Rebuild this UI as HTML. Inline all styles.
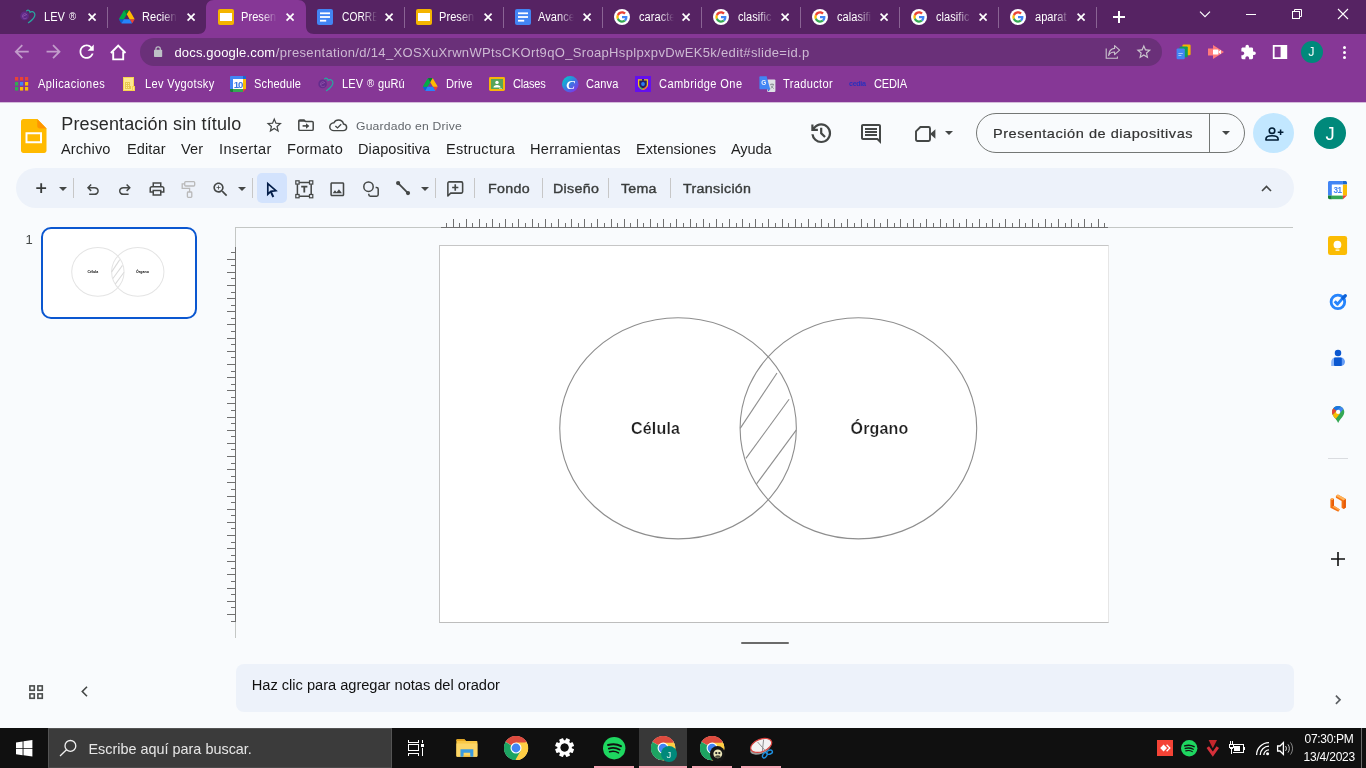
<!DOCTYPE html>
<html lang="es"><head><meta charset="utf-8"><title>Presentación sin título</title>
<style>
*{box-sizing:border-box;margin:0;padding:0}
html,body{width:1366px;height:768px;overflow:hidden;background:#f9fbfd}
body{font-family:"Liberation Sans",sans-serif;position:relative;-webkit-font-smoothing:antialiased}
#root{position:absolute;left:0;top:0;width:1366px;height:768px;overflow:hidden;will-change:transform}
svg{display:block;overflow:visible}
.tt{position:absolute;top:9px;height:16px;width:35.5px;overflow:hidden;font-size:12px;line-height:16px;color:#fff;white-space:nowrap}
.ti{display:inline-block;transform:scaleX(0.92);transform-origin:0 0;letter-spacing:0.05px}
</style></head>
<body><div id="root">
<!-- sec_chrome -->
<div style="position:absolute;left:0px;top:0px;width:1366px;height:34px;background:#562363;"></div>
<div style="position:absolute;left:0px;top:34px;width:1366px;height:68px;background:#863796;"></div>
<div style="position:absolute;left:0px;top:102px;width:1366px;height:1px;background:#d4bbdb;"></div>
<svg style="position:absolute;left:198px;top:0" width="116" height="34" viewBox="0 0 116 34"><path d="M0 34 C5 34 8 31 8 26 V8 C8 3 11 0 16 0 H100 C105 0 108 3 108 8 V26 C108 31 111 34 116 34 Z" fill="#863796"/></svg>
<svg style="position:absolute;left:20px;top:9px" width="16" height="16" viewBox="0 0 16 16" fill="none"><circle cx="4.6" cy="6.9" r="4.3" fill="#5f2a8c" opacity=".85"/><path d="M2.4 7.6L6.8 5.4" stroke="#8a4fa8" stroke-width="1"/><path d="M6.9 6.2C6.2 4.6 4.6 4.2 3.4 5.2C2 6.4 2.2 8.6 3.8 9.4C4.8 9.9 6 9.6 6.8 8.8" stroke="#8a4fa8" stroke-width="0.9"/><path d="M6.6 1.9C7.8 0.7 9.6 1 10.1 3.3C11.5 2.2 13.6 2.5 14.5 4.3C15.5 6.3 14.2 8.7 12.4 10.5C11 11.9 9.6 12.9 8.4 13.7" stroke="#2aa5a0" stroke-width="1.25" stroke-linecap="round"/></svg>
<span class="tt" style="left:43.5px;"><span class="ti">LEV <span style="font-size:10.5px;position:relative;top:-1.2px;letter-spacing:0;margin-left:1px">®</span></span></span>
<svg style="position:absolute;left:87.9px;top:13px" width="8.2" height="8.2" viewBox="0 0 8.2 8.2"><path d="M0.6 0.6L7.6 7.6M7.6 0.6L0.6 7.6" stroke="#fff" stroke-width="1.7"/></svg>
<svg style="position:absolute;left:118.5px;top:10px" width="15.5" height="13.5" viewBox="0 0 87.3 78" preserveAspectRatio="none"><path d="m6.6 66.85 3.85 6.65c.8 1.4 1.95 2.5 3.3 3.3l13.75-23.8h-27.5c0 1.55.4 3.1 1.2 4.5z" fill="#0066da"/><path d="m43.65 25-13.75-23.8c-1.35.8-2.5 1.9-3.3 3.3l-25.4 44a9.06 9.06 0 0 0 -1.2 4.5h27.5z" fill="#00ac47"/><path d="m73.55 76.8c1.35-.8 2.5-1.9 3.3-3.3l1.6-2.75 7.65-13.25c.8-1.4 1.2-2.95 1.2-4.5h-27.502l5.852 11.5z" fill="#ea4335"/><path d="m43.65 25 13.75-23.8c-1.35-.8-2.9-1.2-4.5-1.2h-18.5c-1.6 0-3.15.45-4.5 1.2z" fill="#00832d"/><path d="m59.8 53h-32.3l-13.75 23.8c1.35.8 2.9 1.2 4.5 1.2h50.8c1.6 0 3.15-.45 4.5-1.2z" fill="#2684fc"/><path d="m73.4 26.5-12.7-22c-.8-1.4-1.95-2.5-3.3-3.3l-13.75 23.8 16.15 28h27.45c0-1.55-.4-3.1-1.2-4.5z" fill="#ffba00"/></svg>
<span class="tt" style="left:141.8px;-webkit-mask-image:linear-gradient(90deg,#000 58%,transparent 100%);mask-image:linear-gradient(90deg,#000 58%,transparent 100%);"><span class="ti">Recien</span></span>
<svg style="position:absolute;left:186.9px;top:13px" width="8.2" height="8.2" viewBox="0 0 8.2 8.2"><path d="M0.6 0.6L7.6 7.6M7.6 0.6L0.6 7.6" stroke="#fff" stroke-width="1.7"/></svg>
<svg style="position:absolute;left:218px;top:9px" width="16" height="16" viewBox="0 0 16 16"><rect x="0" y="0" width="16" height="16" rx="2" fill="#F4B400"/><rect x="2" y="4" width="12" height="8" fill="#fff"/></svg>
<span class="tt" style="left:241.4px;-webkit-mask-image:linear-gradient(90deg,#000 58%,transparent 100%);mask-image:linear-gradient(90deg,#000 58%,transparent 100%);"><span class="ti">Presen</span></span>
<svg style="position:absolute;left:285.9px;top:13px" width="8.2" height="8.2" viewBox="0 0 8.2 8.2"><path d="M0.6 0.6L7.6 7.6M7.6 0.6L0.6 7.6" stroke="#fff" stroke-width="1.7"/></svg>
<svg style="position:absolute;left:317px;top:9px" width="16" height="16" viewBox="0 0 16 16"><rect x="0" y="0" width="16" height="16" rx="2" fill="#4285F4"/><rect x="3" y="3.4" width="10" height="1.8" fill="#fff"/><rect x="3" y="7.1" width="10" height="1.8" fill="#fff"/><rect x="3" y="10.8" width="6.2" height="1.8" fill="#fff"/></svg>
<span class="tt" style="left:341.6px;-webkit-mask-image:linear-gradient(90deg,#000 58%,transparent 100%);mask-image:linear-gradient(90deg,#000 58%,transparent 100%);"><span class="ti" style="transform:scaleX(0.85)">CORRE</span></span>
<svg style="position:absolute;left:384.9px;top:13px" width="8.2" height="8.2" viewBox="0 0 8.2 8.2"><path d="M0.6 0.6L7.6 7.6M7.6 0.6L0.6 7.6" stroke="#fff" stroke-width="1.7"/></svg>
<svg style="position:absolute;left:416px;top:9px" width="16" height="16" viewBox="0 0 16 16"><rect x="0" y="0" width="16" height="16" rx="2" fill="#F4B400"/><rect x="2" y="4" width="12" height="8" fill="#fff"/></svg>
<span class="tt" style="left:439.4px;-webkit-mask-image:linear-gradient(90deg,#000 58%,transparent 100%);mask-image:linear-gradient(90deg,#000 58%,transparent 100%);"><span class="ti">Presen</span></span>
<svg style="position:absolute;left:483.9px;top:13px" width="8.2" height="8.2" viewBox="0 0 8.2 8.2"><path d="M0.6 0.6L7.6 7.6M7.6 0.6L0.6 7.6" stroke="#fff" stroke-width="1.7"/></svg>
<svg style="position:absolute;left:515px;top:9px" width="16" height="16" viewBox="0 0 16 16"><rect x="0" y="0" width="16" height="16" rx="2" fill="#4285F4"/><rect x="3" y="3.4" width="10" height="1.8" fill="#fff"/><rect x="3" y="7.1" width="10" height="1.8" fill="#fff"/><rect x="3" y="10.8" width="6.2" height="1.8" fill="#fff"/></svg>
<span class="tt" style="left:538.4px;-webkit-mask-image:linear-gradient(90deg,#000 58%,transparent 100%);mask-image:linear-gradient(90deg,#000 58%,transparent 100%);"><span class="ti">Avance</span></span>
<svg style="position:absolute;left:582.9px;top:13px" width="8.2" height="8.2" viewBox="0 0 8.2 8.2"><path d="M0.6 0.6L7.6 7.6M7.6 0.6L0.6 7.6" stroke="#fff" stroke-width="1.7"/></svg>
<svg style="position:absolute;left:614px;top:9px" width="16" height="16" viewBox="0 0 64 64"><circle cx="32" cy="32" r="32" fill="#fff"/><g transform="translate(9.4,9.4) scale(0.9417)"><path fill="#EA4335" d="M24 9.5c3.54 0 6.71 1.22 9.21 3.6l6.85-6.85C35.9 2.38 30.47 0 24 0 14.62 0 6.51 5.38 2.56 13.22l7.98 6.19C12.43 13.72 17.74 9.5 24 9.5z"/><path fill="#4285F4" d="M46.98 24.55c0-1.57-.15-3.09-.38-4.55H24v9.02h12.94c-.58 2.96-2.26 5.48-4.78 7.18l7.73 6c4.51-4.18 7.09-10.36 7.09-17.65z"/><path fill="#FBBC05" d="M10.53 28.59c-.48-1.45-.76-2.99-.76-4.59s.27-3.14.76-4.59l-7.98-6.19C.92 16.46 0 20.12 0 24c0 3.88.92 7.54 2.56 10.78l7.97-6.19z"/><path fill="#34A853" d="M24 48c6.48 0 11.93-2.13 15.89-5.81l-7.73-6c-2.15 1.45-4.92 2.3-8.16 2.3-6.26 0-11.57-4.22-13.47-9.91l-7.98 6.19C6.51 42.62 14.62 48 24 48z"/></g></svg>
<span class="tt" style="left:638.5px;-webkit-mask-image:linear-gradient(90deg,#000 58%,transparent 100%);mask-image:linear-gradient(90deg,#000 58%,transparent 100%);"><span class="ti">caracte</span></span>
<svg style="position:absolute;left:681.9px;top:13px" width="8.2" height="8.2" viewBox="0 0 8.2 8.2"><path d="M0.6 0.6L7.6 7.6M7.6 0.6L0.6 7.6" stroke="#fff" stroke-width="1.7"/></svg>
<svg style="position:absolute;left:713px;top:9px" width="16" height="16" viewBox="0 0 64 64"><circle cx="32" cy="32" r="32" fill="#fff"/><g transform="translate(9.4,9.4) scale(0.9417)"><path fill="#EA4335" d="M24 9.5c3.54 0 6.71 1.22 9.21 3.6l6.85-6.85C35.9 2.38 30.47 0 24 0 14.62 0 6.51 5.38 2.56 13.22l7.98 6.19C12.43 13.72 17.74 9.5 24 9.5z"/><path fill="#4285F4" d="M46.98 24.55c0-1.57-.15-3.09-.38-4.55H24v9.02h12.94c-.58 2.96-2.26 5.48-4.78 7.18l7.73 6c4.51-4.18 7.09-10.36 7.09-17.65z"/><path fill="#FBBC05" d="M10.53 28.59c-.48-1.45-.76-2.99-.76-4.59s.27-3.14.76-4.59l-7.98-6.19C.92 16.46 0 20.12 0 24c0 3.88.92 7.54 2.56 10.78l7.97-6.19z"/><path fill="#34A853" d="M24 48c6.48 0 11.93-2.13 15.89-5.81l-7.73-6c-2.15 1.45-4.92 2.3-8.16 2.3-6.26 0-11.57-4.22-13.47-9.91l-7.98 6.19C6.51 42.62 14.62 48 24 48z"/></g></svg>
<span class="tt" style="left:737.5px;-webkit-mask-image:linear-gradient(90deg,#000 58%,transparent 100%);mask-image:linear-gradient(90deg,#000 58%,transparent 100%);"><span class="ti">clasific</span></span>
<svg style="position:absolute;left:780.9px;top:13px" width="8.2" height="8.2" viewBox="0 0 8.2 8.2"><path d="M0.6 0.6L7.6 7.6M7.6 0.6L0.6 7.6" stroke="#fff" stroke-width="1.7"/></svg>
<svg style="position:absolute;left:812px;top:9px" width="16" height="16" viewBox="0 0 64 64"><circle cx="32" cy="32" r="32" fill="#fff"/><g transform="translate(9.4,9.4) scale(0.9417)"><path fill="#EA4335" d="M24 9.5c3.54 0 6.71 1.22 9.21 3.6l6.85-6.85C35.9 2.38 30.47 0 24 0 14.62 0 6.51 5.38 2.56 13.22l7.98 6.19C12.43 13.72 17.74 9.5 24 9.5z"/><path fill="#4285F4" d="M46.98 24.55c0-1.57-.15-3.09-.38-4.55H24v9.02h12.94c-.58 2.96-2.26 5.48-4.78 7.18l7.73 6c4.51-4.18 7.09-10.36 7.09-17.65z"/><path fill="#FBBC05" d="M10.53 28.59c-.48-1.45-.76-2.99-.76-4.59s.27-3.14.76-4.59l-7.98-6.19C.92 16.46 0 20.12 0 24c0 3.88.92 7.54 2.56 10.78l7.97-6.19z"/><path fill="#34A853" d="M24 48c6.48 0 11.93-2.13 15.89-5.81l-7.73-6c-2.15 1.45-4.92 2.3-8.16 2.3-6.26 0-11.57-4.22-13.47-9.91l-7.98 6.19C6.51 42.62 14.62 48 24 48z"/></g></svg>
<span class="tt" style="left:836.5px;-webkit-mask-image:linear-gradient(90deg,#000 58%,transparent 100%);mask-image:linear-gradient(90deg,#000 58%,transparent 100%);"><span class="ti">calasifi</span></span>
<svg style="position:absolute;left:879.9px;top:13px" width="8.2" height="8.2" viewBox="0 0 8.2 8.2"><path d="M0.6 0.6L7.6 7.6M7.6 0.6L0.6 7.6" stroke="#fff" stroke-width="1.7"/></svg>
<svg style="position:absolute;left:911px;top:9px" width="16" height="16" viewBox="0 0 64 64"><circle cx="32" cy="32" r="32" fill="#fff"/><g transform="translate(9.4,9.4) scale(0.9417)"><path fill="#EA4335" d="M24 9.5c3.54 0 6.71 1.22 9.21 3.6l6.85-6.85C35.9 2.38 30.47 0 24 0 14.62 0 6.51 5.38 2.56 13.22l7.98 6.19C12.43 13.72 17.74 9.5 24 9.5z"/><path fill="#4285F4" d="M46.98 24.55c0-1.57-.15-3.09-.38-4.55H24v9.02h12.94c-.58 2.96-2.26 5.48-4.78 7.18l7.73 6c4.51-4.18 7.09-10.36 7.09-17.65z"/><path fill="#FBBC05" d="M10.53 28.59c-.48-1.45-.76-2.99-.76-4.59s.27-3.14.76-4.59l-7.98-6.19C.92 16.46 0 20.12 0 24c0 3.88.92 7.54 2.56 10.78l7.97-6.19z"/><path fill="#34A853" d="M24 48c6.48 0 11.93-2.13 15.89-5.81l-7.73-6c-2.15 1.45-4.92 2.3-8.16 2.3-6.26 0-11.57-4.22-13.47-9.91l-7.98 6.19C6.51 42.62 14.62 48 24 48z"/></g></svg>
<span class="tt" style="left:935.5px;-webkit-mask-image:linear-gradient(90deg,#000 58%,transparent 100%);mask-image:linear-gradient(90deg,#000 58%,transparent 100%);"><span class="ti">clasific</span></span>
<svg style="position:absolute;left:978.9px;top:13px" width="8.2" height="8.2" viewBox="0 0 8.2 8.2"><path d="M0.6 0.6L7.6 7.6M7.6 0.6L0.6 7.6" stroke="#fff" stroke-width="1.7"/></svg>
<svg style="position:absolute;left:1010px;top:9px" width="16" height="16" viewBox="0 0 64 64"><circle cx="32" cy="32" r="32" fill="#fff"/><g transform="translate(9.4,9.4) scale(0.9417)"><path fill="#EA4335" d="M24 9.5c3.54 0 6.71 1.22 9.21 3.6l6.85-6.85C35.9 2.38 30.47 0 24 0 14.62 0 6.51 5.38 2.56 13.22l7.98 6.19C12.43 13.72 17.74 9.5 24 9.5z"/><path fill="#4285F4" d="M46.98 24.55c0-1.57-.15-3.09-.38-4.55H24v9.02h12.94c-.58 2.96-2.26 5.48-4.78 7.18l7.73 6c4.51-4.18 7.09-10.36 7.09-17.65z"/><path fill="#FBBC05" d="M10.53 28.59c-.48-1.45-.76-2.99-.76-4.59s.27-3.14.76-4.59l-7.98-6.19C.92 16.46 0 20.12 0 24c0 3.88.92 7.54 2.56 10.78l7.97-6.19z"/><path fill="#34A853" d="M24 48c6.48 0 11.93-2.13 15.89-5.81l-7.73-6c-2.15 1.45-4.92 2.3-8.16 2.3-6.26 0-11.57-4.22-13.47-9.91l-7.98 6.19C6.51 42.62 14.62 48 24 48z"/></g></svg>
<span class="tt" style="left:1034.5px;-webkit-mask-image:linear-gradient(90deg,#000 58%,transparent 100%);mask-image:linear-gradient(90deg,#000 58%,transparent 100%);"><span class="ti">aparat</span></span>
<svg style="position:absolute;left:1077.1000000000001px;top:13px" width="8.2" height="8.2" viewBox="0 0 8.2 8.2"><path d="M0.6 0.6L7.6 7.6M7.6 0.6L0.6 7.6" stroke="#fff" stroke-width="1.7"/></svg>
<div style="position:absolute;left:107px;top:7px;width:1px;height:20.5px;background:#8a6494;"></div>
<div style="position:absolute;left:404px;top:7px;width:1px;height:20.5px;background:#8a6494;"></div>
<div style="position:absolute;left:503px;top:7px;width:1px;height:20.5px;background:#8a6494;"></div>
<div style="position:absolute;left:602px;top:7px;width:1px;height:20.5px;background:#8a6494;"></div>
<div style="position:absolute;left:701px;top:7px;width:1px;height:20.5px;background:#8a6494;"></div>
<div style="position:absolute;left:800px;top:7px;width:1px;height:20.5px;background:#8a6494;"></div>
<div style="position:absolute;left:899px;top:7px;width:1px;height:20.5px;background:#8a6494;"></div>
<div style="position:absolute;left:998px;top:7px;width:1px;height:20.5px;background:#8a6494;"></div>
<div style="position:absolute;left:1096px;top:7px;width:1px;height:20.5px;background:#8a6494;"></div>
<svg style="position:absolute;left:1113px;top:11px" width="12" height="12" viewBox="0 0 12 12"><path d="M6 0V12M0 6H12" stroke="#fff" stroke-width="2"/></svg>
<svg style="position:absolute;left:1199px;top:8px" width="12" height="12" viewBox="0 0 12 12" fill="none"><path d="M1 3.6L6 8.6L11 3.6" stroke="#fff" stroke-width="1.15"/></svg>
<div style="position:absolute;left:1246px;top:14px;width:10px;height:1px;background:#fff;"></div>
<svg style="position:absolute;left:1291px;top:8px" width="12" height="12" viewBox="0 0 12 12" fill="none" stroke="#fff" stroke-width="1"><rect x="1.5" y="3.5" width="7" height="7"/><path d="M3.5 3.5V1.5H10.5V8.5H8.5"/></svg>
<svg style="position:absolute;left:1337px;top:8px" width="12" height="12" viewBox="0 0 12 12" fill="none" stroke="#fff" stroke-width="1.1"><path d="M1 1L11 11M11 1L1 11"/></svg>
<svg style="position:absolute;left:11.35px;top:41.35px;" width="21.3" height="21.3" viewBox="0 0 24 24"><path d="M20 11H7.83l5.59-5.59L12 4l-8 8 8 8 1.41-1.41L7.83 13H20v-2z" fill="#c29ccb"/></svg>
<svg style="position:absolute;left:43.35px;top:41.35px;" width="21.3" height="21.3" viewBox="0 0 24 24"><path d="M12 4l-1.41 1.41L16.17 11H4v2h12.17l-5.58 5.59L12 20l8-8z" fill="#c29ccb"/></svg>
<svg style="position:absolute;left:75.55px;top:41.35px;" width="21.3" height="21.3" viewBox="0 0 24 24"><path d="M17.65 6.35C16.2 4.9 14.21 4 12 4c-4.42 0-7.99 3.58-7.99 8s3.57 8 7.99 8c3.73 0 6.84-2.55 7.73-6h-2.08c-.82 2.33-3.04 4-5.65 4-3.31 0-6-2.69-6-6s2.69-6 6-6c1.66 0 3.14.69 4.22 1.78L13 11h7V4l-2.35 2.35z" fill="#fff"/></svg>
<svg style="position:absolute;left:109.8px;top:43.6px" width="16.4" height="16.6" viewBox="0 0 16.4 16.6" fill="none" stroke="#fff" stroke-width="1.9"><path d="M0.9 9L8.2 1.6L15.5 9" stroke-linejoin="miter"/><path d="M3.2 7.4V15.4H13.2V7.4"/></svg>
<div style="position:absolute;left:140px;top:38px;width:1022px;height:28px;background:#6a3079;border-radius:14px;"></div>
<svg style="position:absolute;left:154px;top:46px" width="8.2" height="11" viewBox="0 0 8.2 11"><rect x="0" y="3.8" width="8.2" height="7.1" rx="0.7" fill="#bdc1c6"/><path d="M1.9 4V2.9C1.9 1.7 2.9 0.8 4.1 0.8C5.3 0.8 6.3 1.7 6.3 2.9V4" stroke="#bdc1c6" stroke-width="1.2" fill="none"/></svg>
<span style="position:absolute;left:174.40px;top:46.00px;font-size:13px;line-height:13px;color:#fff;letter-spacing:0.175px;white-space:nowrap;">docs.google.com</span>
<span style="position:absolute;left:275.80px;top:46.00px;font-size:13px;line-height:13px;color:#cdb9d3;letter-spacing:0.334px;white-space:nowrap;">/presentation/d/14_XOSXuXrwnWPtsCKOrt9qO_SroapHsplpxpvDwEK5k/edit#slide=id.p</span>
<svg style="position:absolute;left:1104.7px;top:44px" width="16" height="16" viewBox="0 0 16 16" fill="none" stroke="#cac4cd" stroke-width="1.1"><path d="M1.2 4.6V14.2H12.4V12.6"/><path d="M9.6 1.6L14.6 6.2L9.6 10.6V8C6.4 8 4.6 9.2 3.6 11.6C3.8 7.6 5.8 4.8 9.6 4.4Z" stroke-linejoin="round"/></svg>
<svg style="position:absolute;left:1135.2px;top:43.400000000000006px;" width="17.6" height="17.6" viewBox="0 0 24 24"><path d="M22 9.24l-7.19-.62L12 2 9.19 8.63 2 9.24l5.46 4.73L5.82 21 12 17.27 18.18 21l-1.63-7.03L22 9.24zM12 15.4l-3.76 2.27 1-4.28-3.32-2.88 4.38-.38L12 6.1l1.71 4.04 4.38.38-3.32 2.88 1 4.28L12 15.4z" fill="#cac4cd"/></svg>
<svg style="position:absolute;left:1176px;top:44px" width="16" height="16" viewBox="0 0 16 16"><rect x="6.4" y="0.6" width="8.2" height="10.6" rx="1.2" fill="#F4B400"/><rect x="3.6" y="2.4" width="8.2" height="10.8" rx="1.2" fill="#0F9D58"/><rect x="0.6" y="4.4" width="8.2" height="10.8" rx="1.2" fill="#4285F4"/><rect x="2.4" y="9" width="4.4" height="1" fill="#a8c7fa"/><rect x="2.4" y="11" width="3" height="1" fill="#a8c7fa"/></svg>
<svg style="position:absolute;left:1207px;top:44px" width="18" height="16" viewBox="0 0 18 16"><path d="M1 4.6H6V1L17 8L6 15V11.4H1Z" fill="#ff7b7b"/><rect x="6" y="5.4" width="5.4" height="5.2" rx="0.6" fill="#fff"/><path d="M11.4 8L13.8 5.8V10.2Z" fill="#fff"/></svg>
<svg style="position:absolute;left:1239.75px;top:43.75px;" width="16.5" height="16.5" viewBox="0 0 24 24"><path d="M20.5 11H19V7c0-1.1-.9-2-2-2h-4V3.5C13 2.12 11.88 1 10.5 1S8 2.12 8 3.5V5H4c-1.1 0-1.99.9-1.99 2v3.8H3.5c1.49 0 2.7 1.21 2.7 2.7s-1.21 2.7-2.7 2.7H2V20c0 1.1.9 2 2 2h3.8v-1.5c0-1.49 1.21-2.7 2.7-2.7 1.49 0 2.7 1.21 2.7 2.7V22H17c1.1 0 2-.9 2-2v-4h1.5c1.38 0 2.5-1.12 2.5-2.5S21.88 11 20.5 11z" fill="#fff"/></svg>
<svg style="position:absolute;left:1272px;top:44px" width="16" height="16" viewBox="0 0 16 16"><path d="M0.8 1H15.2V15H0.8Z M2.6 2.8V13.2H8.6V2.8Z" fill="#fff" fill-rule="evenodd"/></svg>
<div style="position:absolute;left:1301px;top:41px;width:22px;height:22px;background:#00897b;border-radius:50%;"></div>
<span style="position:absolute;left:1308.20px;top:46.00px;font-size:12.5px;line-height:12.5px;color:#fff;white-space:nowrap;opacity:.95">J</span>
<div style="position:absolute;left:1342.5px;top:46.0px;width:3px;height:3px;background:#fff;border-radius:50%;"></div>
<div style="position:absolute;left:1342.5px;top:51.0px;width:3px;height:3px;background:#fff;border-radius:50%;"></div>
<div style="position:absolute;left:1342.5px;top:56.0px;width:3px;height:3px;background:#fff;border-radius:50%;"></div>
<svg style="position:absolute;left:15px;top:77px;" width="13.2" height="13.6" viewBox="0 0 13.2 13.6"><rect x="0" y="0" width="3.2" height="3.6" fill="#ea4335"/><rect x="5" y="0" width="3.2" height="3.6" fill="#ea4335"/><rect x="10" y="0" width="3.2" height="3.6" fill="#ea4335"/><rect x="0" y="5" width="3.2" height="3.6" fill="#34a853"/><rect x="5" y="5" width="3.2" height="3.6" fill="#4285f4"/><rect x="10" y="5" width="3.2" height="3.6" fill="#fbbc04"/><rect x="0" y="10" width="3.2" height="3.6" fill="#34a853"/><rect x="5" y="10" width="3.2" height="3.6" fill="#fbbc04"/><rect x="10" y="10" width="3.2" height="3.6" fill="#fbbc04"/></svg>
<span style="position:absolute;left:37.70px;top:78.00px;font-size:12px;line-height:12px;color:#fff;letter-spacing:0.473px;white-space:nowrap;transform:scaleX(0.92);transform-origin:0 0;">Aplicaciones</span>
<span style="position:absolute;left:144.70px;top:78.00px;font-size:12px;line-height:12px;color:#fff;letter-spacing:0.394px;white-space:nowrap;transform:scaleX(0.92);transform-origin:0 0;">Lev Vygotsky</span>
<span style="position:absolute;left:254.20px;top:78.00px;font-size:12px;line-height:12px;color:#fff;letter-spacing:0.145px;white-space:nowrap;transform:scaleX(0.92);transform-origin:0 0;">Schedule</span>
<span style="position:absolute;left:342.30px;top:78.00px;font-size:12px;line-height:12px;color:#fff;white-space:nowrap;letter-spacing:0.12px;transform:scaleX(0.92);transform-origin:0 0">LEV <span style="font-size:10.5px;position:relative;top:-1.2px;letter-spacing:0;margin:0 0.6px 0 0.8px">®</span> guRú</span>
<span style="position:absolute;left:446.10px;top:78.00px;font-size:12px;line-height:12px;color:#fff;letter-spacing:0.160px;white-space:nowrap;transform:scaleX(0.92);transform-origin:0 0;">Drive</span>
<span style="position:absolute;left:513.30px;top:78.00px;font-size:12px;line-height:12px;color:#fff;letter-spacing:-0.208px;white-space:nowrap;transform:scaleX(0.92);transform-origin:0 0;">Clases</span>
<span style="position:absolute;left:586.20px;top:78.00px;font-size:12px;line-height:12px;color:#fff;letter-spacing:0.106px;white-space:nowrap;transform:scaleX(0.92);transform-origin:0 0;">Canva</span>
<span style="position:absolute;left:659.00px;top:78.00px;font-size:12px;line-height:12px;color:#fff;letter-spacing:0.465px;white-space:nowrap;transform:scaleX(0.92);transform-origin:0 0;">Cambridge One</span>
<span style="position:absolute;left:783.10px;top:78.00px;font-size:12px;line-height:12px;color:#fff;letter-spacing:0.382px;white-space:nowrap;transform:scaleX(0.92);transform-origin:0 0;">Traductor</span>
<span style="position:absolute;left:873.50px;top:78.00px;font-size:12px;line-height:12px;color:#fff;letter-spacing:-0.204px;white-space:nowrap;transform:scaleX(0.92);transform-origin:0 0;">CEDIA</span>
<svg style="position:absolute;left:120px;top:74px" width="18" height="20" viewBox="120 74 18 20" shape-rendering="crispEdges"><rect x="123" y="77" width="11" height="14" fill="#f8d54e"/><rect x="124" y="78" width="9" height="12" fill="#fde792"/><rect x="125" y="82" width="5" height="7" fill="#e8c74e"/><rect x="130" y="86" width="1" height="3" fill="#e8c74e"/><rect x="126" y="83" width="1" height="1" fill="#fdeaa0"/><rect x="128" y="83" width="1" height="1" fill="#fdeaa0"/><rect x="126" y="85" width="1" height="1" fill="#fdeaa0"/><rect x="128" y="85" width="1" height="1" fill="#fdeaa0"/><rect x="126" y="87" width="1" height="1" fill="#fdeaa0"/><rect x="128" y="87" width="1" height="1" fill="#fdeaa0"/><rect x="132" y="86" width="3" height="5" fill="#f8d54e"/><rect x="133" y="87" width="1" height="3" fill="#fde792"/></svg>
<svg style="position:absolute;left:230px;top:76px" width="16" height="16" viewBox="0 0 16 16"><rect x="3" y="3" width="10" height="10" fill="#fff"/><path d="M0 1.2C0 0.5 0.5 0 1.2 0H13V3H3V13H0Z" fill="#4285F4"/><path d="M13 0H14.8C15.5 0 16 0.5 16 1.2V3H13Z" fill="#1967D2"/><rect x="13" y="3" width="3" height="10" fill="#FBBC04"/><rect x="3" y="13" width="10" height="3" fill="#34A853"/><path d="M0 13H3V16H1.2C0.5 16 0 15.5 0 14.8Z" fill="#188038"/><path d="M13 13H16L13 16Z" fill="#EA4335"/><text x="8.1" y="11.5" font-family="Liberation Sans, sans-serif" font-size="9.6" font-weight="700" fill="#3b78e7" text-anchor="middle" letter-spacing="-1.1">10</text></svg>
<svg style="position:absolute;left:318px;top:77px" width="16" height="16" viewBox="0 0 16 16" fill="none"><circle cx="4.6" cy="6.9" r="4.3" fill="#5f2a8c" opacity=".85"/><path d="M2.4 7.6L6.8 5.4" stroke="#8a4fa8" stroke-width="1"/><path d="M6.9 6.2C6.2 4.6 4.6 4.2 3.4 5.2C2 6.4 2.2 8.6 3.8 9.4C4.8 9.9 6 9.6 6.8 8.8" stroke="#8a4fa8" stroke-width="0.9"/><path d="M6.6 1.9C7.8 0.7 9.6 1 10.1 3.3C11.5 2.2 13.6 2.5 14.5 4.3C15.5 6.3 14.2 8.7 12.4 10.5C11 11.9 9.6 12.9 8.4 13.7" stroke="#2aa5a0" stroke-width="1.25" stroke-linecap="round"/></svg>
<svg style="position:absolute;left:422.8px;top:77.6px" width="14.6" height="12.9" viewBox="0 0 87.3 78" preserveAspectRatio="none"><path d="m6.6 66.85 3.85 6.65c.8 1.4 1.95 2.5 3.3 3.3l13.75-23.8h-27.5c0 1.55.4 3.1 1.2 4.5z" fill="#0066da"/><path d="m43.65 25-13.75-23.8c-1.35.8-2.5 1.9-3.3 3.3l-25.4 44a9.06 9.06 0 0 0 -1.2 4.5h27.5z" fill="#00ac47"/><path d="m73.55 76.8c1.35-.8 2.5-1.9 3.3-3.3l1.6-2.75 7.65-13.25c.8-1.4 1.2-2.95 1.2-4.5h-27.502l5.852 11.5z" fill="#ea4335"/><path d="m43.65 25 13.75-23.8c-1.35-.8-2.9-1.2-4.5-1.2h-18.5c-1.6 0-3.15.45-4.5 1.2z" fill="#00832d"/><path d="m59.8 53h-32.3l-13.75 23.8c1.35.8 2.9 1.2 4.5 1.2h50.8c1.6 0 3.15-.45 4.5-1.2z" fill="#2684fc"/><path d="m73.4 26.5-12.7-22c-.8-1.4-1.95-2.5-3.3-3.3l-13.75 23.8 16.15 28h27.45c0-1.55-.4-3.1-1.2-4.5z" fill="#ffba00"/></svg>
<svg style="position:absolute;left:489px;top:77px" width="16" height="14" viewBox="0 0 16 14"><rect width="16" height="14" rx="1.4" fill="#f6b60b"/><rect x="2" y="2" width="12" height="10" fill="#57a55a"/><circle cx="8" cy="5.4" r="1.7" fill="#fff"/><path d="M4.4 10.6C4.4 8.8 6 7.9 8 7.9S11.6 8.8 11.6 10.6Z" fill="#fff"/><rect x="10" y="11.1" width="3" height="0.9" fill="#fff" opacity=".55"/></svg>
<svg style="position:absolute;left:561.5px;top:76px" width="16.5" height="16.5" viewBox="0 0 16 16"><defs><linearGradient id="cv" x1="0.1" y1="0.1" x2="0.9" y2="0.9"><stop offset="0" stop-color="#00c8cc"/><stop offset=".5" stop-color="#3a79e2"/><stop offset="1" stop-color="#8130e8"/></linearGradient></defs><circle cx="8" cy="8" r="8" fill="url(#cv)"/><text x="8.3" y="12.4" font-family="Liberation Serif, serif" font-style="italic" font-weight="700" font-size="12.6" fill="#fff" text-anchor="middle">C</text></svg>
<svg style="position:absolute;left:635px;top:76px" width="16" height="16" viewBox="0 0 16 16"><rect width="16" height="16" fill="#6410ee"/><path d="M3.6 3.8H12.4V8.4C12.4 10.8 10.4 12.4 8 13.4C5.6 12.4 3.6 10.8 3.6 8.4Z" fill="#231f63" stroke="#f7c21c" stroke-width="1.3"/><rect x="7" y="3" width="2" height="1.8" fill="#231f63"/><circle cx="8" cy="8" r="1.9" fill="#2d7df6"/><path d="M4.4 10.6C5.2 11.8 6.4 12.6 8 13.3" stroke="#34b36a" stroke-width="1.2" fill="none"/><path d="M8 13.3C9.6 12.6 10.8 11.8 11.6 10.6" stroke="#ef5a3c" stroke-width="1.2" fill="none"/></svg>
<svg style="position:absolute;left:758.5px;top:76px" width="17" height="16.5" viewBox="0 0 17 16.5"><rect x="8.2" y="3.6" width="8.2" height="12.4" rx="1" fill="#dfe1e5"/><path d="M11 8.4H15M13 7.4V8.4M11.6 12.6C13 11.6 14.2 10.2 14.4 8.4M12 9.6C12.6 10.8 13.6 11.8 14.8 12.6" stroke="#80868b" stroke-width="0.8" fill="none"/><path d="M0.4 1.2C0.4 0.6 0.9 0.2 1.4 0.2H7.6L11.2 13.2H1.4C0.9 13.2 0.4 12.8 0.4 12.2Z" fill="#4285F4"/><path d="M8.4 13.2H11.2L9.4 15.4Z" fill="#3367d6"/><text x="4.8" y="9" font-family="Liberation Sans, sans-serif" font-size="6.5" font-weight="700" fill="#e8f0fe" text-anchor="middle">G</text></svg>
<span style="position:absolute;left:849px;top:80.4px;font-size:7.2px;line-height:8px;font-weight:700;color:#2a30bd;letter-spacing:-0.35px">cedia</span>
<!-- sec_header -->
<svg style="position:absolute;left:21.4px;top:119px" width="25.5" height="34" viewBox="0 0 26 34" preserveAspectRatio="none"><path d="M2.4 0H16.6L26 9.4V31.6C26 32.9 24.9 34 23.6 34H2.4C1.1 34 0 32.9 0 31.6V2.4C0 1.1 1.1 0 2.4 0Z" fill="#FFBA00"/><path d="M16.6 0L26 9.4H19C17.7 9.4 16.6 8.3 16.6 7Z" fill="#FF9500"/><path d="M4.6 13.3H21.4V24.2H4.6Z M6.6 15.3V22.2H19.4V15.3Z" fill="#fff" fill-rule="evenodd"/></svg>
<span style="position:absolute;left:61.30px;top:115.00px;font-size:18px;line-height:18px;color:#2a2a2a;letter-spacing:0.126px;white-space:nowrap;">Presentación sin título</span>
<svg style="position:absolute;left:264.75px;top:115.75px;" width="18.5" height="18.5" viewBox="0 0 24 24"><path d="M22 9.24l-7.19-.62L12 2 9.19 8.63 2 9.24l5.46 4.73L5.82 21 12 17.27 18.18 21l-1.63-7.03L22 9.24zM12 15.4l-3.76 2.27 1-4.28-3.32-2.88 4.38-.38L12 6.1l1.71 4.04 4.38.38-3.32 2.88 1 4.28L12 15.4z" fill="#444746"/></svg>
<svg style="position:absolute;left:298px;top:118.8px" width="16" height="12.3" viewBox="0 0 16 13" fill="none" preserveAspectRatio="none"><path d="M0.8 2.2C0.8 1.5 1.3 1 2 1H6L7.6 2.6H14C14.7 2.6 15.2 3.1 15.2 3.8V10.8C15.2 11.5 14.7 12 14 12H2C1.3 12 0.8 11.5 0.8 10.8Z" stroke="#444746" stroke-width="1.5"/><path d="M0.8 1H6L7.6 2.8H0.8Z" fill="#444746"/><path d="M4.6 7.3H9.4" stroke="#444746" stroke-width="1.7"/><path d="M8 4.4L11.4 7.3L8 10.2Z" fill="#444746"/></svg>
<svg style="position:absolute;left:328.7px;top:118.6px" width="18.4" height="12.6" viewBox="0 0 19 13" fill="none" preserveAspectRatio="none"><path d="M5 12H14.6C16.6 12 18.2 10.5 18.2 8.6C18.2 6.8 16.8 5.4 15 5.2C14.5 2.8 12.4 1 9.8 1C7.8 1 6 2.1 5.1 3.9C2.7 4.1 0.8 6 0.8 8.2C0.8 10.3 2.7 12 5 12Z" stroke="#444746" stroke-width="1.5"/><path d="M6.6 7.2L8.8 9.2L12.6 5.4" stroke="#444746" stroke-width="1.4"/></svg>
<span style="position:absolute;left:355.60px;top:120.00px;font-size:11.6px;line-height:11.6px;color:#63676c;letter-spacing:0.167px;white-space:nowrap;transform:scaleX(1.05);transform-origin:0 0;">Guardado en Drive</span>
<span style="position:absolute;left:61.40px;top:142.00px;font-size:14px;line-height:14px;color:#1f1f1f;letter-spacing:0.144px;white-space:nowrap;transform:scaleX(1.04);transform-origin:0 0;">Archivo</span>
<span style="position:absolute;left:126.70px;top:142.00px;font-size:14px;line-height:14px;color:#1f1f1f;letter-spacing:0.106px;white-space:nowrap;transform:scaleX(1.04);transform-origin:0 0;">Editar</span>
<span style="position:absolute;left:181.40px;top:142.00px;font-size:14px;line-height:14px;color:#1f1f1f;letter-spacing:0.143px;white-space:nowrap;transform:scaleX(1.04);transform-origin:0 0;">Ver</span>
<span style="position:absolute;left:218.70px;top:142.00px;font-size:14px;line-height:14px;color:#1f1f1f;letter-spacing:0.401px;white-space:nowrap;transform:scaleX(1.04);transform-origin:0 0;">Insertar</span>
<span style="position:absolute;left:286.70px;top:142.00px;font-size:14px;line-height:14px;color:#1f1f1f;letter-spacing:0.246px;white-space:nowrap;transform:scaleX(1.04);transform-origin:0 0;">Formato</span>
<span style="position:absolute;left:357.70px;top:142.00px;font-size:14px;line-height:14px;color:#1f1f1f;letter-spacing:0.095px;white-space:nowrap;transform:scaleX(1.04);transform-origin:0 0;">Diapositiva</span>
<span style="position:absolute;left:445.80px;top:142.00px;font-size:14px;line-height:14px;color:#1f1f1f;letter-spacing:0.264px;white-space:nowrap;transform:scaleX(1.04);transform-origin:0 0;">Estructura</span>
<span style="position:absolute;left:530.40px;top:142.00px;font-size:14px;line-height:14px;color:#1f1f1f;letter-spacing:0.273px;white-space:nowrap;transform:scaleX(1.04);transform-origin:0 0;">Herramientas</span>
<span style="position:absolute;left:636.40px;top:142.00px;font-size:14px;line-height:14px;color:#1f1f1f;letter-spacing:0.059px;white-space:nowrap;transform:scaleX(1.04);transform-origin:0 0;">Extensiones</span>
<span style="position:absolute;left:731.40px;top:142.00px;font-size:14px;line-height:14px;color:#1f1f1f;letter-spacing:-0.081px;white-space:nowrap;transform:scaleX(1.04);transform-origin:0 0;">Ayuda</span>
<svg style="position:absolute;left:807.8px;top:119.7px;" width="26.4" height="26.4" viewBox="0 0 24 24"><path d="M12 21q-3.45 0-6.012-2.287Q3.425 16.425 3.05 13H5.1q.35 2.6 2.313 4.3Q9.375 19 12 19q2.925 0 4.963-2.038Q19 14.925 19 12t-2.037-4.963Q14.925 5 12 5q-1.725 0-3.225.8T6.25 8H9v2H3V4h2v2.350q1.275-1.600 3.113-2.475Q9.950 3 12 3q1.875 0 3.513.712 1.637.713 2.850 1.926 1.212 1.212 1.925 2.850Q21 10.125 21 12t-.712 3.513q-.713 1.637-1.925 2.850-1.213 1.212-2.850 1.925Q13.875 21 12 21Zm2.800-4.800L11 12.400V7h2v4.600l3.200 3.200Z" fill="#444746"/></svg>
<svg style="position:absolute;left:859.0px;top:121.9px;" width="24" height="24" viewBox="0 0 24 24"><path d="M21.99 4c0-1.1-.89-2-1.99-2H4c-1.1 0-2 .9-2 2v12c0 1.1.9 2 2 2h14l4 4-.01-18zM20 4v13.17L18.83 16H4V4h16zM6 12h12v2H6zm0-3h12v2H6zm0-3h12v2H6z" fill="#444746"/></svg>
<svg style="position:absolute;left:914.5px;top:126px" width="21" height="16" viewBox="0 0 21 16" fill="none"><path d="M5.4 1H13.6C14.4 1 15 1.6 15 2.4V13.6C15 14.4 14.4 15 13.6 15H2.4C1.6 15 1 14.4 1 13.6V5.4Z" stroke="#444746" stroke-width="1.9" stroke-linejoin="round"/><path d="M15.6 7.6L20.4 3.2V12.8L15.6 8.4Z" fill="#444746"/></svg>
<svg style="position:absolute;left:944.8px;top:130.70000000000002px" width="8" height="4.2" viewBox="0 0 10 5"><path d="M0 0H10L5 5Z" fill="#444746"/></svg>
<div style="position:absolute;left:976px;top:113px;width:269px;height:40px;border:1px solid #747775;border-radius:20px;"></div>
<div style="position:absolute;left:1209px;top:113px;width:1px;height:40px;background:#747775;"></div>
<span style="position:absolute;left:993.40px;top:127.00px;font-size:13.6px;line-height:13.6px;color:#333;letter-spacing:0.499px;white-space:nowrap;transform:scaleX(1.07);transform-origin:0 0;-webkit-text-stroke:0.2px #333;">Presentación de diapositivas</span>
<svg style="position:absolute;left:1222.0px;top:130.70000000000002px" width="8" height="4.2" viewBox="0 0 10 5"><path d="M0 0H10L5 5Z" fill="#444746"/></svg>
<div style="position:absolute;left:1253px;top:113px;width:41px;height:40px;background:#c2e7ff;border-radius:50%;"></div>
<svg style="position:absolute;left:1264.6px;top:126.9px" width="19" height="14" viewBox="0 0 20 15" preserveAspectRatio="none" fill="none" stroke="#001d35" stroke-width="1.7"><circle cx="7.4" cy="3.9" r="2.9"/><path d="M1 14V12.9C1 10.6 4 9.4 7.4 9.4S13.8 10.6 13.8 12.9V14Z" stroke-linejoin="round"/><path d="M16.4 2.6V8.6M13.4 5.6H19.4" stroke-width="1.6"/></svg>
<div style="position:absolute;left:1314px;top:117px;width:32px;height:32px;background:#00897b;border-radius:50%;"></div>
<span style="position:absolute;left:1325.60px;top:125.00px;font-size:18.4px;line-height:18.4px;color:#fff;white-space:nowrap;">J</span>
<div style="position:absolute;left:16px;top:168px;width:1278px;height:40px;background:#edf2fa;border-radius:20px;"></div>
<svg style="position:absolute;left:35.9px;top:182.9px" width="10.4" height="10.4" viewBox="0 0 11 11"><path d="M5.5 0.3V10.7M0.3 5.5H10.7" stroke="#393c3b" stroke-width="1.95"/></svg>
<svg style="position:absolute;left:59.0px;top:186.70000000000002px" width="8" height="4.2" viewBox="0 0 10 5"><path d="M0 0H10L5 5Z" fill="#444746"/></svg>
<div style="position:absolute;left:73px;top:178px;width:1px;height:20px;background:#c7c7c7;"></div>
<svg style="position:absolute;left:84.19999999999999px;top:180.6px;" width="17.8" height="17.8" viewBox="0 0 24 24"><path d="M7 19v-2h7.1q1.575 0 2.737-1Q18 15 18 13.5T16.838 11Q15.675 10 14.1 10H7.8l2.6 2.6L9 14 4 9l5-5 1.4 1.4L7.8 8h6.3q2.425 0 4.163 1.575Q20 11.15 20 13.5q0 2.35-1.737 3.925Q16.525 19 14.1 19Z" fill="#444746"/></svg>
<svg style="position:absolute;left:116.1px;top:180.6px;transform:scaleX(-1);" width="17.8" height="17.8" viewBox="0 0 24 24"><path d="M7 19v-2h7.1q1.575 0 2.737-1Q18 15 18 13.5T16.838 11Q15.675 10 14.1 10H7.8l2.6 2.6L9 14 4 9l5-5 1.4 1.4L7.8 8h6.3q2.425 0 4.163 1.575Q20 11.15 20 13.5q0 2.35-1.737 3.925Q16.525 19 14.1 19Z" fill="#444746"/></svg>
<svg style="position:absolute;left:148.0px;top:180.0px;" width="18" height="18" viewBox="0 0 24 24"><path d="M19 8h-1V3H6v5H5c-1.66 0-3 1.34-3 3v6h4v4h12v-4h4v-6c0-1.66-1.34-3-3-3zM8 5h8v3H8V5zm8 12v2H8v-4h8v2zm2-2v-2H6v2H4v-4c0-.55.45-1 1-1h14c.55 0 1 .45 1 1v4h-2z" fill="#444746"/></svg>
<svg style="position:absolute;left:181px;top:181px" width="14.6" height="17" viewBox="0 0 14.6 17" fill="none" stroke="#b9b9b9" stroke-width="1.3"><rect x="3.7" y="0.7" width="10" height="4.3" rx="1"/><path d="M3.7 2.9H1.2V7.4H8.6V11"/><rect x="6.4" y="11" width="4.4" height="5.4" rx="0.8"/></svg>
<svg style="position:absolute;left:211.4px;top:179.6px;" width="19" height="19" viewBox="0 0 24 24"><path d="M15.5 14h-.79l-.28-.27C15.41 12.59 16 11.11 16 9.5 16 5.91 13.09 3 9.5 3S3 5.91 3 9.5 5.91 16 9.5 16c1.61 0 3.09-.59 4.23-1.57l.27.28v.79l5 4.99L20.49 19l-4.99-5zm-6 0C7.01 14 5 11.99 5 9.5S7.01 5 9.5 5 14 7.01 14 9.5 11.99 14 9.5 14zm2.5-4h-2v2H9v-2H7V9h2V7h1v2h2v1z" fill="#444746"/></svg>
<svg style="position:absolute;left:238.0px;top:186.70000000000002px" width="8" height="4.2" viewBox="0 0 10 5"><path d="M0 0H10L5 5Z" fill="#444746"/></svg>
<div style="position:absolute;left:252px;top:178px;width:1px;height:20px;background:#c7c7c7;"></div>
<div style="position:absolute;left:257px;top:173px;width:30px;height:30px;background:#d3e3fd;border-radius:5px;"></div>
<svg style="position:absolute;left:266px;top:180.6px" width="13" height="18" viewBox="0 0 13 18" fill="none"><path d="M1.8 2.6V13.2L4.9 10.3L9.9 9.6Z" stroke="#041e49" stroke-width="1.7" stroke-linejoin="miter"/><path d="M4.8 10.6L7.3 16" stroke="#041e49" stroke-width="2"/></svg>
<svg style="position:absolute;left:294.5px;top:179.5px" width="18.6" height="18.6" viewBox="0 0 18.6 18.6" fill="none" stroke="#444746"><path d="M2.4 4.2V14.4M16.2 4.2V14.4M4.2 2.4H14.4M4.2 16.2H14.4" stroke-width="1.5"/><rect x="0.8" y="0.8" width="3.3" height="3.3" stroke-width="1.2"/><rect x="14.5" y="0.8" width="3.3" height="3.3" stroke-width="1.2"/><rect x="0.8" y="14.5" width="3.3" height="3.3" stroke-width="1.2"/><rect x="14.5" y="14.5" width="3.3" height="3.3" stroke-width="1.2"/><path d="M6.2 6.7H12.4M9.3 6.7V12.6" stroke-width="1.8"/></svg>
<svg style="position:absolute;left:327.7px;top:179.7px;" width="18.6" height="18.6" viewBox="0 0 24 24"><path d="M19 5v14H5V5h14m0-2H5c-1.1 0-2 .9-2 2v14c0 1.1.9 2 2 2h14c1.1 0 2-.9 2-2V5c0-1.1-.9-2-2-2zm-4.86 8.86l-3 3.87L9 13.14 6 17h12l-3.86-5.14z" fill="#444746"/></svg>
<svg style="position:absolute;left:362px;top:180px" width="18" height="18" viewBox="362 180 18 18" fill="none" stroke="#444746" stroke-width="1.5"><circle cx="368.5" cy="186.7" r="4.7"/><path d="M375.6 187.4H376.6C377.5 187.4 378.2 188.1 378.2 189V194.6C378.2 195.5 377.5 196.2 376.6 196.2H370.4C369.5 196.2 368.8 195.5 368.8 194.6V193.8"/></svg>
<svg style="position:absolute;left:395px;top:180px" width="16" height="16" viewBox="395 180 16 16"><path d="M398.1 183.1L408 193.1" stroke="#444746" stroke-width="1.8"/><circle cx="398.1" cy="183.1" r="2.1" fill="#444746"/><circle cx="408" cy="193.1" r="2.1" fill="#444746"/></svg>
<svg style="position:absolute;left:421.0px;top:186.70000000000002px" width="8" height="4.2" viewBox="0 0 10 5"><path d="M0 0H10L5 5Z" fill="#444746"/></svg>
<div style="position:absolute;left:435px;top:178px;width:1px;height:20px;background:#c7c7c7;"></div>
<svg style="position:absolute;left:446.6px;top:180.8px" width="16.5" height="16.4" viewBox="0 0 17 16.6" fill="none" stroke="#444746" preserveAspectRatio="none"><path d="M0.9 15.2V2.2C0.9 1.5 1.5 0.9 2.2 0.9H14.8C15.5 0.9 16.1 1.5 16.1 2.2V11C16.1 11.7 15.5 12.3 14.8 12.3H3.8Z" stroke-width="1.6" stroke-linejoin="round"/><path d="M8.5 3.4V9.8M5.3 6.6H11.7" stroke-width="1.7"/></svg>
<div style="position:absolute;left:474px;top:178px;width:1px;height:20px;background:#c7c7c7;"></div>
<span style="position:absolute;left:487.80px;top:182.00px;font-size:13.7px;line-height:13.7px;color:#3a3d3c;letter-spacing:0.289px;white-space:nowrap;transform:scaleX(1.04);transform-origin:0 0;-webkit-text-stroke:0.4px #3a3d3c;">Fondo</span>
<span style="position:absolute;left:552.50px;top:182.00px;font-size:13.7px;line-height:13.7px;color:#3a3d3c;letter-spacing:0.296px;white-space:nowrap;transform:scaleX(1.04);transform-origin:0 0;-webkit-text-stroke:0.4px #3a3d3c;">Diseño</span>
<div style="position:absolute;left:542px;top:178px;width:1px;height:20px;background:#c7c7c7;"></div>
<div style="position:absolute;left:608px;top:178px;width:1px;height:20px;background:#c7c7c7;"></div>
<span style="position:absolute;left:621.40px;top:182.00px;font-size:13.7px;line-height:13.7px;color:#3a3d3c;letter-spacing:0.182px;white-space:nowrap;transform:scaleX(1.04);transform-origin:0 0;-webkit-text-stroke:0.4px #3a3d3c;">Tema</span>
<div style="position:absolute;left:670px;top:178px;width:1px;height:20px;background:#c7c7c7;"></div>
<span style="position:absolute;left:683.40px;top:182.00px;font-size:13.7px;line-height:13.7px;color:#3a3d3c;letter-spacing:0.308px;white-space:nowrap;transform:scaleX(1.04);transform-origin:0 0;-webkit-text-stroke:0.4px #3a3d3c;">Transición</span>
<svg style="position:absolute;left:1260.6px;top:185.4px" width="11" height="7" viewBox="0 0 11 7" fill="none"><path d="M1 6L5.5 1.5L10 6" stroke="#444746" stroke-width="1.6"/></svg>
<!-- sec_editor -->
<span style="position:absolute;left:25.40px;top:233.00px;font-size:13px;line-height:13px;color:#444746;white-space:nowrap;">1</span>
<div style="position:absolute;left:41px;top:227px;width:156px;height:92px;background:#fff;border:2.5px solid #0b57d0;border-radius:10px;"></div>
<svg style="position:absolute;left:43px;top:229px" width="152" height="88" viewBox="43 229 152 88"><g transform="translate(119,273) scale(0.2212) translate(-773.5,-433.5)"><ellipse cx="678.05" cy="428.3" rx="118.3" ry="110.6" fill="none" stroke="#e4e4e4" stroke-width="4.6"/><ellipse cx="858.4" cy="428.3" rx="118.3" ry="110.6" fill="none" stroke="#e4e4e4" stroke-width="4.6"/><path d="M777 373L740.2 428.4" stroke="#dadada" stroke-width="4.6" fill="none"/><path d="M789.1 399.2L745.9 458.4" stroke="#dadada" stroke-width="4.6" fill="none"/><path d="M796.2 430.2L756.6 483.8" stroke="#dadada" stroke-width="4.6" fill="none"/><text x="631" y="434" font-family="Liberation Sans, sans-serif" font-weight="700" font-size="16" fill="#000"  textLength="49" lengthAdjust="spacing">Célula</text><text x="850.6" y="434" font-family="Liberation Sans, sans-serif" font-weight="700" font-size="16" fill="#000"  textLength="57.6" lengthAdjust="spacing">Órgano</text></g></svg>
<div style="position:absolute;left:235px;top:227px;width:1058px;height:1px;background:#c4c7c5;"></div>
<div style="position:absolute;left:235px;top:227px;width:1px;height:411px;background:#c4c7c5;"></div>
<svg style="position:absolute;left:0;top:0" width="1366" height="728" viewBox="0 0 1366 728" shape-rendering="crispEdges"><rect x="441" y="227" width="667" height="1" fill="#707070"/><rect x="446" y="223" width="1" height="4" fill="#707070"/><rect x="453" y="219" width="1" height="8" fill="#707070"/><rect x="459" y="223" width="1" height="4" fill="#707070"/><rect x="466" y="219" width="1" height="8" fill="#707070"/><rect x="472" y="223" width="1" height="4" fill="#707070"/><rect x="479" y="219" width="1" height="8" fill="#707070"/><rect x="486" y="223" width="1" height="4" fill="#707070"/><rect x="492" y="219" width="1" height="8" fill="#707070"/><rect x="499" y="223" width="1" height="4" fill="#707070"/><rect x="505" y="219" width="1" height="8" fill="#707070"/><rect x="512" y="223" width="1" height="4" fill="#707070"/><rect x="518" y="219" width="1" height="8" fill="#707070"/><rect x="525" y="223" width="1" height="4" fill="#707070"/><rect x="532" y="219" width="1" height="8" fill="#707070"/><rect x="538" y="223" width="1" height="4" fill="#707070"/><rect x="545" y="219" width="1" height="8" fill="#707070"/><rect x="551" y="223" width="1" height="4" fill="#707070"/><rect x="558" y="219" width="1" height="8" fill="#707070"/><rect x="565" y="223" width="1" height="4" fill="#707070"/><rect x="571" y="219" width="1" height="8" fill="#707070"/><rect x="578" y="223" width="1" height="4" fill="#707070"/><rect x="584" y="219" width="1" height="8" fill="#707070"/><rect x="591" y="223" width="1" height="4" fill="#707070"/><rect x="597" y="219" width="1" height="8" fill="#707070"/><rect x="604" y="223" width="1" height="4" fill="#707070"/><rect x="611" y="219" width="1" height="8" fill="#707070"/><rect x="617" y="223" width="1" height="4" fill="#707070"/><rect x="624" y="219" width="1" height="8" fill="#707070"/><rect x="630" y="223" width="1" height="4" fill="#707070"/><rect x="637" y="219" width="1" height="8" fill="#707070"/><rect x="643" y="223" width="1" height="4" fill="#707070"/><rect x="650" y="219" width="1" height="8" fill="#707070"/><rect x="657" y="223" width="1" height="4" fill="#707070"/><rect x="663" y="219" width="1" height="8" fill="#707070"/><rect x="670" y="223" width="1" height="4" fill="#707070"/><rect x="676" y="219" width="1" height="8" fill="#707070"/><rect x="683" y="223" width="1" height="4" fill="#707070"/><rect x="690" y="219" width="1" height="8" fill="#707070"/><rect x="696" y="223" width="1" height="4" fill="#707070"/><rect x="703" y="219" width="1" height="8" fill="#707070"/><rect x="709" y="223" width="1" height="4" fill="#707070"/><rect x="716" y="219" width="1" height="8" fill="#707070"/><rect x="722" y="223" width="1" height="4" fill="#707070"/><rect x="729" y="219" width="1" height="8" fill="#707070"/><rect x="736" y="223" width="1" height="4" fill="#707070"/><rect x="742" y="219" width="1" height="8" fill="#707070"/><rect x="749" y="223" width="1" height="4" fill="#707070"/><rect x="755" y="219" width="1" height="8" fill="#707070"/><rect x="762" y="223" width="1" height="4" fill="#707070"/><rect x="768" y="219" width="1" height="8" fill="#707070"/><rect x="775" y="223" width="1" height="4" fill="#707070"/><rect x="782" y="219" width="1" height="8" fill="#707070"/><rect x="788" y="223" width="1" height="4" fill="#707070"/><rect x="795" y="219" width="1" height="8" fill="#707070"/><rect x="801" y="223" width="1" height="4" fill="#707070"/><rect x="808" y="219" width="1" height="8" fill="#707070"/><rect x="815" y="223" width="1" height="4" fill="#707070"/><rect x="821" y="219" width="1" height="8" fill="#707070"/><rect x="828" y="223" width="1" height="4" fill="#707070"/><rect x="834" y="219" width="1" height="8" fill="#707070"/><rect x="841" y="223" width="1" height="4" fill="#707070"/><rect x="847" y="219" width="1" height="8" fill="#707070"/><rect x="854" y="223" width="1" height="4" fill="#707070"/><rect x="861" y="219" width="1" height="8" fill="#707070"/><rect x="867" y="223" width="1" height="4" fill="#707070"/><rect x="874" y="219" width="1" height="8" fill="#707070"/><rect x="880" y="223" width="1" height="4" fill="#707070"/><rect x="887" y="219" width="1" height="8" fill="#707070"/><rect x="894" y="223" width="1" height="4" fill="#707070"/><rect x="900" y="219" width="1" height="8" fill="#707070"/><rect x="907" y="223" width="1" height="4" fill="#707070"/><rect x="913" y="219" width="1" height="8" fill="#707070"/><rect x="920" y="223" width="1" height="4" fill="#707070"/><rect x="926" y="219" width="1" height="8" fill="#707070"/><rect x="933" y="223" width="1" height="4" fill="#707070"/><rect x="940" y="219" width="1" height="8" fill="#707070"/><rect x="946" y="223" width="1" height="4" fill="#707070"/><rect x="953" y="219" width="1" height="8" fill="#707070"/><rect x="959" y="223" width="1" height="4" fill="#707070"/><rect x="966" y="219" width="1" height="8" fill="#707070"/><rect x="972" y="223" width="1" height="4" fill="#707070"/><rect x="979" y="219" width="1" height="8" fill="#707070"/><rect x="986" y="223" width="1" height="4" fill="#707070"/><rect x="992" y="219" width="1" height="8" fill="#707070"/><rect x="999" y="223" width="1" height="4" fill="#707070"/><rect x="1005" y="219" width="1" height="8" fill="#707070"/><rect x="1012" y="223" width="1" height="4" fill="#707070"/><rect x="1019" y="219" width="1" height="8" fill="#707070"/><rect x="1025" y="223" width="1" height="4" fill="#707070"/><rect x="1032" y="219" width="1" height="8" fill="#707070"/><rect x="1038" y="223" width="1" height="4" fill="#707070"/><rect x="1045" y="219" width="1" height="8" fill="#707070"/><rect x="1051" y="223" width="1" height="4" fill="#707070"/><rect x="1058" y="219" width="1" height="8" fill="#707070"/><rect x="1065" y="223" width="1" height="4" fill="#707070"/><rect x="1071" y="219" width="1" height="8" fill="#707070"/><rect x="1078" y="223" width="1" height="4" fill="#707070"/><rect x="1084" y="219" width="1" height="8" fill="#707070"/><rect x="1091" y="223" width="1" height="4" fill="#707070"/><rect x="1098" y="219" width="1" height="8" fill="#707070"/><rect x="1104" y="223" width="1" height="4" fill="#707070"/><rect x="235" y="247" width="1" height="375" fill="#707070"/><rect x="231" y="252" width="4" height="1" fill="#707070"/><rect x="227" y="259" width="8" height="1" fill="#707070"/><rect x="231" y="265" width="4" height="1" fill="#707070"/><rect x="227" y="272" width="8" height="1" fill="#707070"/><rect x="231" y="278" width="4" height="1" fill="#707070"/><rect x="227" y="285" width="8" height="1" fill="#707070"/><rect x="231" y="292" width="4" height="1" fill="#707070"/><rect x="227" y="298" width="8" height="1" fill="#707070"/><rect x="231" y="305" width="4" height="1" fill="#707070"/><rect x="227" y="311" width="8" height="1" fill="#707070"/><rect x="231" y="318" width="4" height="1" fill="#707070"/><rect x="227" y="324" width="8" height="1" fill="#707070"/><rect x="231" y="331" width="4" height="1" fill="#707070"/><rect x="227" y="338" width="8" height="1" fill="#707070"/><rect x="231" y="344" width="4" height="1" fill="#707070"/><rect x="227" y="351" width="8" height="1" fill="#707070"/><rect x="231" y="357" width="4" height="1" fill="#707070"/><rect x="227" y="364" width="8" height="1" fill="#707070"/><rect x="231" y="371" width="4" height="1" fill="#707070"/><rect x="227" y="377" width="8" height="1" fill="#707070"/><rect x="231" y="384" width="4" height="1" fill="#707070"/><rect x="227" y="390" width="8" height="1" fill="#707070"/><rect x="231" y="397" width="4" height="1" fill="#707070"/><rect x="227" y="403" width="8" height="1" fill="#707070"/><rect x="231" y="410" width="4" height="1" fill="#707070"/><rect x="227" y="417" width="8" height="1" fill="#707070"/><rect x="231" y="423" width="4" height="1" fill="#707070"/><rect x="227" y="430" width="8" height="1" fill="#707070"/><rect x="231" y="436" width="4" height="1" fill="#707070"/><rect x="227" y="443" width="8" height="1" fill="#707070"/><rect x="231" y="449" width="4" height="1" fill="#707070"/><rect x="227" y="456" width="8" height="1" fill="#707070"/><rect x="231" y="463" width="4" height="1" fill="#707070"/><rect x="227" y="469" width="8" height="1" fill="#707070"/><rect x="231" y="476" width="4" height="1" fill="#707070"/><rect x="227" y="482" width="8" height="1" fill="#707070"/><rect x="231" y="489" width="4" height="1" fill="#707070"/><rect x="227" y="496" width="8" height="1" fill="#707070"/><rect x="231" y="502" width="4" height="1" fill="#707070"/><rect x="227" y="509" width="8" height="1" fill="#707070"/><rect x="231" y="515" width="4" height="1" fill="#707070"/><rect x="227" y="522" width="8" height="1" fill="#707070"/><rect x="231" y="528" width="4" height="1" fill="#707070"/><rect x="227" y="535" width="8" height="1" fill="#707070"/><rect x="231" y="542" width="4" height="1" fill="#707070"/><rect x="227" y="548" width="8" height="1" fill="#707070"/><rect x="231" y="555" width="4" height="1" fill="#707070"/><rect x="227" y="561" width="8" height="1" fill="#707070"/><rect x="231" y="568" width="4" height="1" fill="#707070"/><rect x="227" y="574" width="8" height="1" fill="#707070"/><rect x="231" y="581" width="4" height="1" fill="#707070"/><rect x="227" y="588" width="8" height="1" fill="#707070"/><rect x="231" y="594" width="4" height="1" fill="#707070"/><rect x="227" y="601" width="8" height="1" fill="#707070"/><rect x="231" y="607" width="4" height="1" fill="#707070"/><rect x="227" y="614" width="8" height="1" fill="#707070"/><rect x="231" y="621" width="4" height="1" fill="#707070"/></svg>
<div style="position:absolute;left:439px;top:245px;width:670px;height:378px;background:#fff;border:1px solid #c6c6c6;border-right-color:#e6e6e6;border-bottom-color:#bdbdbd;"></div>
<svg style="position:absolute;left:0;top:0" width="1366" height="728" viewBox="0 0 1366 728"><ellipse cx="678.05" cy="428.3" rx="118.3" ry="110.6" fill="none" stroke="#8e8e8e" stroke-width="1.1"/><ellipse cx="858.4" cy="428.3" rx="118.3" ry="110.6" fill="none" stroke="#8e8e8e" stroke-width="1.1"/><path d="M777 373L740.2 428.4" stroke="#8e8e8e" stroke-width="1.1" fill="none"/><path d="M789.1 399.2L745.9 458.4" stroke="#8e8e8e" stroke-width="1.1" fill="none"/><path d="M796.2 430.2L756.6 483.8" stroke="#8e8e8e" stroke-width="1.1" fill="none"/><text x="631" y="434" font-family="Liberation Sans, sans-serif" font-weight="700" font-size="16" fill="#1f1f1f" stroke="#fff" stroke-width="0.22" textLength="49" lengthAdjust="spacing">Célula</text><text x="850.6" y="434" font-family="Liberation Sans, sans-serif" font-weight="700" font-size="16" fill="#1f1f1f" stroke="#fff" stroke-width="0.22" textLength="57.6" lengthAdjust="spacing">Órgano</text></svg>
<div style="position:absolute;left:741px;top:642px;width:48px;height:2px;background:#6b6b6b;border-radius:1px;"></div>
<div style="position:absolute;left:236px;top:664px;width:1058px;height:48px;background:#edf2fa;border-radius:8px;"></div>
<span style="position:absolute;left:251.80px;top:678.00px;font-size:14.67px;line-height:14.67px;color:#111;letter-spacing:-0.030px;white-space:nowrap;">Haz clic para agregar notas del orador</span>
<svg style="position:absolute;left:29px;top:685px;" width="14.2" height="14.2" viewBox="0 0 14.2 14.2"><rect x="0.9" y="0.9" width="4.4" height="4.4" fill="none" stroke="#4a4d4c" stroke-width="1.6"/><rect x="8.9" y="0.9" width="4.4" height="4.4" fill="none" stroke="#4a4d4c" stroke-width="1.6"/><rect x="0.9" y="8.9" width="4.4" height="4.4" fill="none" stroke="#4a4d4c" stroke-width="1.6"/><rect x="8.9" y="8.9" width="4.4" height="4.4" fill="none" stroke="#4a4d4c" stroke-width="1.6"/></svg>
<svg style="position:absolute;left:80.6px;top:686.2px" width="7" height="11" viewBox="0 0 7 11" fill="none"><path d="M6 0.8L1.3 5.5L6 10.2" stroke="#444746" stroke-width="1.6"/></svg>
<svg style="position:absolute;left:1328.2px;top:180.8px" width="19" height="18.2" viewBox="0 0 19 18.2"><rect x="3" y="3" width="13" height="12.4" fill="#fff"/><path d="M0 1.6C0 0.7 0.7 0 1.6 0H14.9V3.6H3.8V14.6H0Z" fill="#4285F4"/><path d="M14.9 0H17.4C18.3 0 19 0.7 19 1.6V3.6H14.9Z" fill="#1967D2"/><rect x="14.9" y="3.6" width="4.1" height="11" fill="#FBBC04"/><rect x="3.8" y="14.6" width="11.1" height="3.6" fill="#34A853"/><path d="M0 14.6H3.8V18.2H1.6C0.7 18.2 0 17.5 0 16.6Z" fill="#188038"/><path d="M14.9 14.6H19L14.9 18.2Z" fill="#EA4335"/><text x="9.45" y="12.4" font-family="Liberation Sans, sans-serif" font-size="8.2" font-weight="700" fill="#4285F4" text-anchor="middle" letter-spacing="-0.7">31</text></svg>
<svg style="position:absolute;left:1328px;top:236.4px" width="19.1" height="19.1" viewBox="0 0 19.2 19.4" preserveAspectRatio="none"><rect width="19.2" height="19.4" rx="2.4" fill="#FBBC04"/><circle cx="9.5" cy="8.8" r="3.9" fill="#fff"/><rect x="7.6" y="13.7" width="3.9" height="1.3" fill="#fff"/></svg>
<svg style="position:absolute;left:1328px;top:292px" width="20" height="20" viewBox="1328 292 20 20" fill="none"><circle cx="1337.9" cy="301.9" r="6.8" stroke="#2684FC" stroke-width="2.8"/><path d="M1334.7 301.3L1337.5 304.1L1343.2 297.6" stroke="#2684FC" stroke-width="2.9" stroke-linejoin="round"/><path d="M1342.9 298L1345.3 295.7" stroke="#0b61d9" stroke-width="3.3" stroke-linecap="round"/></svg>
<svg style="position:absolute;left:1330px;top:349px" width="16" height="18" viewBox="1330 349 16 18"><circle cx="1338" cy="352.9" r="3.25" fill="#0b57d0"/><path d="M1331.2 365.9V362C1331.2 359.4 1333 357.5 1335.6 357.5H1338V365.9Z" fill="#8ab4f8"/><path d="M1338 357.5H1340.6C1343.2 357.5 1345 359.5 1345 361.8C1345 364.1 1343.4 365.9 1341 365.9H1338Z" fill="#669df6"/><rect x="1334" y="357.5" width="7.8" height="8.4" rx="1" fill="#0b57d0"/></svg>
<svg style="position:absolute;left:1332px;top:405.5px" width="12.3" height="17.1" viewBox="0 0 12.8 18" preserveAspectRatio="none"><path d="M6.4 0C2.9 0 0 2.8 0 6.3C0 9.4 2 11.4 3.8 13.6C5 15.1 5.8 16.6 6.4 18C7 16.6 7.8 15.1 9 13.6C10.8 11.4 12.8 9.4 12.8 6.3C12.8 2.8 9.9 0 6.4 0Z" fill="#34A853"/><path d="M1.5 2.3C0.6 3.4 0 4.8 0 6.3C0 7.5 0.3 8.5 0.7 9.4L4.8 5Z" fill="#EA4335"/><path d="M6.4 6.3L4.8 5L0.7 9.4C1.4 10.9 2.6 12.2 3.8 13.6L8.4 7.8Z" fill="#FBBC04"/><path d="M1.5 2.3C2.6 0.9 4.4 0 6.4 0C7.5 0 8.5 0.25 9.4 0.7L4.8 5Z" fill="#1a73e8"/><path d="M9.4 0.7C10.5 1.2 11.4 2.1 12 3.2L7.6 8.2L4.8 5Z" fill="#4285F4"/><circle cx="6.4" cy="6.3" r="2.25" fill="#fff"/></svg>
<div style="position:absolute;left:1328px;top:458px;width:20px;height:1px;background:#dadce0;"></div>
<svg style="position:absolute;left:1329px;top:493px" width="18" height="20" viewBox="1329 493 18 20"><path d="M1335.9 496L1337.9 494.6L1345.8 499.1V507.5L1343.6 508.9L1341.6 507.7V500.9L1335.9 497.8Z" fill="#F57212"/><path d="M1335.9 496L1337.9 494.6L1345.8 499.1L1343.7 500.4Z" fill="#FFB45A"/><path d="M1343.7 500.4L1345.8 499.1V507.5L1343.6 508.9Z" fill="#E65A0A"/><path d="M1330.4 499.1L1332.3 498L1334 499.1V505.8L1339.9 509.5L1338.3 511.8L1330.4 507.7Z" fill="#F57212"/><path d="M1330.4 499.1L1332.3 498L1334 499.1L1332.3 500.2Z" fill="#FFB45A"/><path d="M1332.3 500.2L1334 499.1V505.8L1332.3 506.8Z" fill="#E65A0A"/><path d="M1332.3 506.8L1334 505.8L1339.9 509.5L1338.6 510.6Z" fill="#FFA548"/></svg>
<svg style="position:absolute;left:1331px;top:552px" width="14" height="14" viewBox="0 0 14 14"><path d="M7 0V14M0 7H14" stroke="#111" stroke-width="1.6"/></svg>
<svg style="position:absolute;left:1334.8px;top:695.2px" width="6.2" height="9.6" viewBox="0 0 7 11" fill="none"><path d="M1 0.8L5.7 5.5L1 10.2" stroke="#5a5d61" stroke-width="1.9"/></svg>
<!-- sec_taskbar -->
<div style="position:absolute;left:0px;top:728px;width:1366px;height:40px;background:#101010;"></div>
<div style="position:absolute;left:48px;top:728px;width:344px;height:40px;background:#3b3b3b;border:1px solid #545454;border-bottom-color:#4a4a4a;"></div>
<svg style="position:absolute;left:16px;top:739.6px" width="16.4" height="16.6" viewBox="0 0 16.4 16.6"><path d="M0 2.4L6.6 1.5V7.9H0Z M7.5 1.35L16.4 0.1V7.9H7.5Z M0 8.8H6.6V15.2L0 14.3Z M7.5 8.8H16.4V16.6L7.5 15.35Z" fill="#fff"/></svg>
<svg style="position:absolute;left:59px;top:739px" width="18" height="18" viewBox="0 0 18 18" fill="none" stroke="#f0f0f0" stroke-width="1.3"><circle cx="11.4" cy="6.9" r="5.4"/><path d="M7.5 10.7L1 17"/></svg>
<span style="position:absolute;left:88.40px;top:742.00px;font-size:14.4px;line-height:14.4px;color:#e6e6e6;letter-spacing:0.012px;white-space:nowrap;">Escribe aquí para buscar.</span>
<svg style="position:absolute;left:400px;top:732px" width="30" height="30" viewBox="400 732 30 30" shape-rendering="crispEdges"><rect x="408" y="744" width="11" height="1" fill="#fff"/><rect x="408" y="750" width="11" height="1" fill="#fff"/><rect x="408" y="744" width="1" height="7" fill="#fff"/><rect x="418" y="744" width="1" height="7" fill="#fff"/><rect x="408" y="742" width="11" height="1" fill="#fff"/><rect x="408" y="740" width="1" height="2" fill="#fff"/><rect x="418" y="740" width="1" height="2" fill="#fff"/><rect x="408" y="753" width="11" height="1" fill="#fff"/><rect x="408" y="753" width="1" height="3" fill="#fff"/><rect x="418" y="753" width="1" height="3" fill="#fff"/><rect x="422" y="740" width="1" height="3" fill="#fff"/><rect x="421" y="744" width="3" height="3" fill="#fff"/><rect x="422" y="748" width="1" height="8" fill="#fff"/></svg>
<svg style="position:absolute;left:455.8px;top:738.8px" width="21.8" height="18.2" viewBox="0 0 22.4 18" preserveAspectRatio="none"><path d="M0.4 1.2C0.4 0.6 0.9 0.2 1.4 0.2H8.6L10.2 2H21C21.6 2 22 2.4 22 3V16.6C22 17.2 21.6 17.6 21 17.6H1.4C0.9 17.6 0.4 17.2 0.4 16.6Z" fill="#f9c846"/><path d="M0.4 1.2C0.4 0.6 0.9 0.2 1.4 0.2H8.6L10.2 2H0.4Z" fill="#e8a820"/><path d="M0.4 4.4H22V16.6C22 17.2 21.6 17.6 21 17.6H1.4C0.9 17.6 0.4 17.2 0.4 16.6Z" fill="#fcd667"/><path d="M4.6 10.2H17.8V17.6H14.6V13.6H7.8V17.6H4.6Z" fill="#3b9be0"/><rect x="7.8" y="16.4" width="6.8" height="1.2" fill="#f0b93a"/></svg>
<svg style="position:absolute;left:503.9px;top:735.7px" width="24" height="24" viewBox="-12 -12 24 24"><circle r="12" fill="#fff"/><path d="M0 0L-10.39 -6.00A12 12 0 0 1 10.39 -6.00Z" fill="#DD4B3E"/><path d="M0 0L10.39 -6.00A12 12 0 0 1 0.00 12.00Z" fill="#FFCE44"/><path d="M0 0L0.00 12.00A12 12 0 0 1 -10.39 -6.00Z" fill="#1DA462"/><path d="M0 -5.4H10.8A12 12 0 0 0 -10.4 -6Z" fill="#DD4B3E"/><path d="M4.7 2.7L-0.7 12A12 12 0 0 0 10.8 -5.4H0Z" fill="#FFCE44"/><path d="M-4.7 2.7L-10.4 -6A12 12 0 0 0 -0.7 12L4.7 2.7Z" fill="#1DA462"/><circle r="5.5" fill="#fff"/><circle r="4.4" fill="#4285F4"/></svg>
<svg style="position:absolute;left:555.3px;top:738.3px" width="19.2" height="19.2" viewBox="-9.5 -9.5 19 19"><rect x="-2.1" y="-9.4" width="4.2" height="5" rx="0.6" fill="#fff" transform="rotate(22.5)"/><rect x="-2.1" y="-9.4" width="4.2" height="5" rx="0.6" fill="#fff" transform="rotate(67.5)"/><rect x="-2.1" y="-9.4" width="4.2" height="5" rx="0.6" fill="#fff" transform="rotate(112.5)"/><rect x="-2.1" y="-9.4" width="4.2" height="5" rx="0.6" fill="#fff" transform="rotate(157.5)"/><rect x="-2.1" y="-9.4" width="4.2" height="5" rx="0.6" fill="#fff" transform="rotate(202.5)"/><rect x="-2.1" y="-9.4" width="4.2" height="5" rx="0.6" fill="#fff" transform="rotate(247.5)"/><rect x="-2.1" y="-9.4" width="4.2" height="5" rx="0.6" fill="#fff" transform="rotate(292.5)"/><rect x="-2.1" y="-9.4" width="4.2" height="5" rx="0.6" fill="#fff" transform="rotate(337.5)"/><circle r="5.7" fill="none" stroke="#fff" stroke-width="3"/></svg>
<svg style="position:absolute;left:602.6999999999999px;top:736.5px" width="22.4" height="22.4" viewBox="-12 -12 24 24"><circle r="12" fill="#1ED760"/><path d="M-6.6 -3.4C-2 -4.8 3.4 -4.4 7.2 -2.2" stroke="#111" stroke-width="2.2" fill="none" stroke-linecap="round"/><path d="M-5.8 0.4C-2 -0.7 2.6 -0.3 6 1.6" stroke="#111" stroke-width="1.9" fill="none" stroke-linecap="round"/><path d="M-5 3.9C-1.8 3 1.8 3.3 4.6 5" stroke="#111" stroke-width="1.6" fill="none" stroke-linecap="round"/></svg>
<div style="position:absolute;left:639px;top:728px;width:48px;height:40px;background:#383838;"></div>
<svg style="position:absolute;left:650.6999999999999px;top:735.8px" width="24.2" height="24.2" viewBox="-12 -12 24 24"><circle r="12" fill="#fff"/><path d="M0 0L-10.39 -6.00A12 12 0 0 1 10.39 -6.00Z" fill="#DD4B3E"/><path d="M0 0L10.39 -6.00A12 12 0 0 1 0.00 12.00Z" fill="#FFCE44"/><path d="M0 0L0.00 12.00A12 12 0 0 1 -10.39 -6.00Z" fill="#1DA462"/><path d="M0 -5.4H10.8A12 12 0 0 0 -10.4 -6Z" fill="#DD4B3E"/><path d="M4.7 2.7L-0.7 12A12 12 0 0 0 10.8 -5.4H0Z" fill="#FFCE44"/><path d="M-4.7 2.7L-10.4 -6A12 12 0 0 0 -0.7 12L4.7 2.7Z" fill="#1DA462"/><circle r="5.5" fill="#fff"/><circle r="4.4" fill="#4285F4"/></svg>
<div style="position:absolute;left:661px;top:746.2px;width:16px;height:16px;background:#00897b;border-radius:50%;"></div>
<span style="position:absolute;left:666.40px;top:750.00px;font-size:9.6px;line-height:9.6px;color:#d6efea;white-space:nowrap;">J</span>
<svg style="position:absolute;left:699.9px;top:735.8px" width="24.2" height="24.2" viewBox="-12 -12 24 24"><circle r="12" fill="#fff"/><path d="M0 0L-10.39 -6.00A12 12 0 0 1 10.39 -6.00Z" fill="#DD4B3E"/><path d="M0 0L10.39 -6.00A12 12 0 0 1 0.00 12.00Z" fill="#FFCE44"/><path d="M0 0L0.00 12.00A12 12 0 0 1 -10.39 -6.00Z" fill="#1DA462"/><path d="M0 -5.4H10.8A12 12 0 0 0 -10.4 -6Z" fill="#DD4B3E"/><path d="M4.7 2.7L-0.7 12A12 12 0 0 0 10.8 -5.4H0Z" fill="#FFCE44"/><path d="M-4.7 2.7L-10.4 -6A12 12 0 0 0 -0.7 12L4.7 2.7Z" fill="#1DA462"/><circle r="5.5" fill="#fff"/><circle r="4.4" fill="#4285F4"/></svg>
<div style="position:absolute;left:710px;top:746.4px;width:15.4px;height:15.4px;background:#151515;border-radius:50%;"></div>
<svg style="position:absolute;left:713px;top:749.4px" width="9.6" height="9.6" viewBox="0 0 10 10"><circle cx="5" cy="5" r="4.6" fill="#e9e4b8"/><circle cx="3.4" cy="4.2" r="1.2" fill="#222"/><circle cx="6.6" cy="4.2" r="1.2" fill="#222"/><path d="M2.4 7.4C3.8 6.2 6.2 6.2 7.6 7.4V9H2.4Z" fill="#4a4a3a"/></svg>
<svg style="position:absolute;left:748px;top:735px" width="28" height="26" viewBox="748 735 28 26"><ellipse cx="760.4" cy="748.6" rx="10.6" ry="5.2" fill="#9c9c9c" transform="rotate(-20 760.4 748.6)"/><ellipse cx="761.2" cy="745.4" rx="11" ry="6.2" fill="#f3f3f3" stroke="#d9423e" stroke-width="1.2" transform="rotate(-21 761.2 745.4)"/><path d="M757.6 742L765.2 750.6M763.6 739.6L762.4 751" stroke="#909090" stroke-width="1" fill="none"/><ellipse cx="764.8" cy="755.2" rx="2.9" ry="1.9" fill="none" stroke="#1e8fe0" stroke-width="1.4" transform="rotate(-55 764.8 755.2)"/><ellipse cx="769.6" cy="752.2" rx="2.9" ry="1.9" fill="none" stroke="#1e8fe0" stroke-width="1.4" transform="rotate(-20 769.6 752.2)"/></svg>
<div style="position:absolute;left:594px;top:766px;width:40px;height:2px;background:#f4a3b3;"></div>
<div style="position:absolute;left:639px;top:766px;width:48px;height:2px;background:#f4a3b3;"></div>
<div style="position:absolute;left:692px;top:766px;width:40px;height:2px;background:#f4a3b3;"></div>
<div style="position:absolute;left:741px;top:766px;width:40px;height:2px;background:#f4a3b3;"></div>
<div style="position:absolute;left:1157px;top:740px;width:16px;height:16px;background:#f44336;"></div>
<svg style="position:absolute;left:1157px;top:740px" width="16" height="16" viewBox="0 0 16 16"><path d="M6.6 4.6L10 8L6.6 11.4L3.2 8Z" fill="#fff"/><path d="M9.6 4.8L12.8 8L9.6 11.2" stroke="#fff" stroke-width="1.3" fill="none"/></svg>
<svg style="position:absolute;left:1180.7px;top:739.5px" width="16.4" height="16.4" viewBox="-12 -12 24 24"><circle r="12" fill="#1ED760"/><path d="M-6.6 -3.4C-2 -4.8 3.4 -4.4 7.2 -2.2" stroke="#111" stroke-width="2.2" fill="none" stroke-linecap="round"/><path d="M-5.8 0.4C-2 -0.7 2.6 -0.3 6 1.6" stroke="#111" stroke-width="1.9" fill="none" stroke-linecap="round"/><path d="M-5 3.9C-1.8 3 1.8 3.3 4.6 5" stroke="#111" stroke-width="1.6" fill="none" stroke-linecap="round"/></svg>
<svg style="position:absolute;left:1204px;top:738px" width="18" height="20" viewBox="1204 738 18 20"><path d="M1208.6 740H1217L1212.8 748.2Z" fill="#c4262c"/><path d="M1207.8 747.2L1212.8 754.2L1217.8 747.2" stroke="#d5303a" stroke-width="3" fill="none"/></svg>
<svg style="position:absolute;left:1226px;top:738px" width="22" height="20" viewBox="1226 738 22 20" shape-rendering="crispEdges"><rect x="1233" y="744" width="11" height="1" fill="#fff"/><rect x="1233" y="752" width="11" height="1" fill="#fff"/><rect x="1243" y="744" width="1" height="9" fill="#fff"/><rect x="1244" y="747" width="1" height="3" fill="#fff"/><rect x="1234" y="746" width="6" height="5" fill="#fff"/><rect x="1228" y="741" width="6" height="8" fill="#101010"/><rect x="1229" y="749" width="4" height="5" fill="#101010"/><rect x="1230" y="741" width="1" height="3" fill="#fff"/><rect x="1232" y="741" width="1" height="3" fill="#fff"/><rect x="1229" y="744" width="5" height="4" fill="#fff"/><rect x="1230" y="745" width="3" height="2" fill="#101010"/><rect x="1230" y="748" width="3" height="1" fill="#fff"/><rect x="1231" y="749" width="1" height="5" fill="#fff"/></svg>
<svg style="position:absolute;left:1255.6px;top:742px" width="14" height="13.6" viewBox="0 0 14 13.6" fill="none" stroke="#fff" stroke-width="1.3"><path d="M0.6 13C0.6 6.2 6.2 0.6 13 0.6"/><path d="M4.2 13C4.2 8.2 8.2 4.2 13 4.2"/><path d="M7.8 13C7.8 10.2 10.2 7.8 13 7.8"/><circle cx="11.6" cy="11.8" r="1.5" fill="#fff" stroke="none"/></svg>
<svg style="position:absolute;left:1276.6px;top:740.6px" width="17" height="15" viewBox="0 0 17 15" fill="none" stroke="#fff" stroke-width="1"><path d="M0.6 5H3L6.4 1.6V13.4L3 10H0.6Z" stroke-width="1.3"/><path d="M8.6 5.2C9.6 6.6 9.6 8.4 8.6 9.8"/><path d="M11 3.4C12.8 5.8 12.8 9.2 11 11.6" opacity=".75"/><path d="M13.4 1.4C16.2 5 16.2 10 13.4 13.6" opacity=".5"/></svg>
<span style="position:absolute;left:1304.60px;top:733.00px;font-size:12px;line-height:12px;color:#fff;letter-spacing:-0.320px;white-space:nowrap;">07:30:PM</span>
<span style="position:absolute;left:1303.60px;top:751.00px;font-size:12px;line-height:12px;color:#fff;letter-spacing:-0.221px;white-space:nowrap;">13/4/2023</span>
<div style="position:absolute;left:1361px;top:728px;width:1px;height:40px;background:#6a6a6a;"></div>
</div></body></html>
